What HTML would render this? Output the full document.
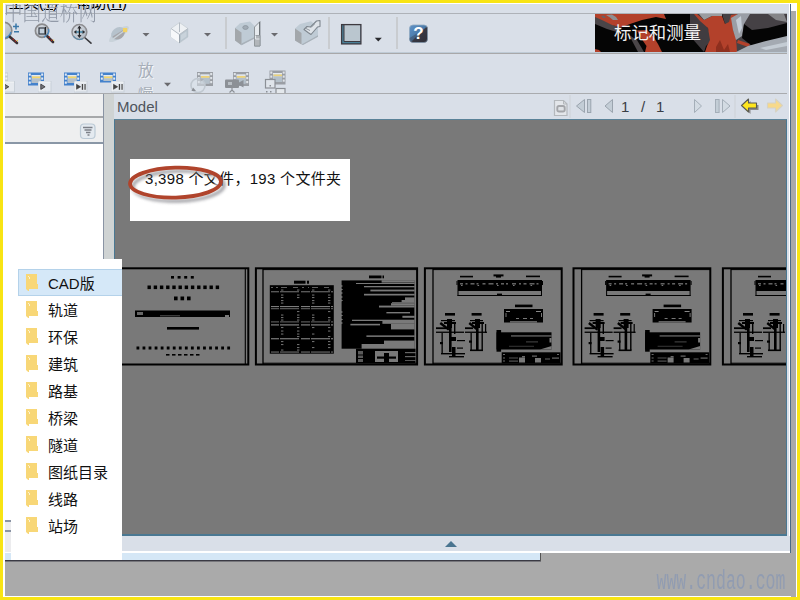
<!DOCTYPE html>
<html lang="zh-CN">
<head>
<meta charset="utf-8">
<title>标记和测量</title>
<style>
html,body{margin:0;padding:0;}
body{width:800px;height:600px;overflow:hidden;background:#f8e414;position:relative;font-family:"Liberation Sans","Noto Sans CJK SC",sans-serif;}
.abs{position:absolute;}
#frame{left:3px;top:3px;width:794px;height:594px;background:#fff;overflow:hidden;}
/* coordinates inside #stage are page coordinates */
#stage{left:-3px;top:-3px;width:800px;height:600px;}
#appbg{left:5px;top:4px;width:785px;height:557px;background:#d9dfe8;}
#deskgray{left:5px;top:561px;width:791px;height:35px;background:#aaaaaa;}
#rightgray{left:791px;top:11px;width:5px;height:586px;background:#aaaaaa;}
#rightline{left:790px;top:4px;width:1px;height:549px;background:#4a6a88;}
#rightwhite{left:789px;top:4px;width:1px;height:549px;background:#fff;}
.hline{height:1px;background:#a9abae;}
#menutext,#menutext2{top:-6px;font-size:15px;line-height:18px;color:#000;white-space:pre;height:18px;overflow:hidden;}
#menutext{right:742px;}
#menutext2{right:673px;}
#wm1{left:4px;top:-1px;font-family:"Liberation Serif","Noto Serif CJK SC",serif;font-weight:300;font-size:18.600px;color:#929aa8;white-space:nowrap;line-height:22px;transform-origin:0 0;transform:scale(1,1.220);}
#leftpanel{left:5px;top:94px;width:98px;height:466px;background:#fff;}
#lp1{left:5px;top:94px;width:98px;height:22px;background:#eeeff0;}
#lp2{left:5px;top:118px;width:98px;height:24px;background:#eeeff0;}
#lpline1{left:5px;top:116px;width:98px;height:2px;background:#a6a8aa;}
#lpline2{left:5px;top:142px;width:98px;height:2px;background:#8a97a6;}
#lpborder{left:103px;top:94px;width:1px;height:166px;background:#8a94a4;}
#splitter{left:104px;top:94px;width:10px;height:170px;background:#cfd3d3;}
#modelbar{left:114px;top:94px;width:673px;height:25px;background:#d9dfe8;}
#modeltxt{left:117px;top:98px;font-size:15px;line-height:17px;color:#4e545c;}
.navt{top:98px;font-size:15px;line-height:17px;color:#3a3e46;}
#bannertxt{left:614px;top:20px;font-size:17.400px;line-height:26px;color:#f2f2f2;white-space:nowrap;}
#helpq{left:409px;top:24px;width:19px;text-align:center;font-size:17px;font-weight:bold;line-height:20px;color:#fff;}
#fang{left:138px;top:61px;font-size:15.500px;line-height:20px;color:#a6aeb8;text-shadow:1px 1px 0 #f4f6f8;}
#fang2{left:138px;top:87px;height:6px;width:20px;overflow:hidden;}
#fang2 span{display:block;font-size:15.500px;line-height:20px;color:#a6aeb8;text-shadow:1px 1px 0 #f4f6f8;margin-top:-3px;}
#view{left:114px;top:119px;width:673px;height:417px;background:#797979;border-left:1px solid #4a7892;border-top:1px solid #5a8298;border-right:1px solid #4a7892;border-bottom:2px solid #4a7892;box-sizing:border-box;overflow:hidden;}
#botbar{left:5px;top:536px;width:785px;height:15px;background:#d9dfe8;}
#botwhite{left:5px;top:551px;width:785px;height:2px;background:#fff;}
#botblue{left:5px;top:553px;width:535px;height:7px;background:#d5e7f6;}
#botdark{left:5px;top:560px;width:536px;height:1px;background:#3a3a44;border-bottom:1px solid #77777c;}
#botdarkr{left:540px;top:553px;width:1px;height:8px;background:#555;}
#tri{left:445px;top:541px;width:0;height:0;border-left:6px solid transparent;border-right:6px solid transparent;border-bottom:6px solid #4a7590;}
#popup{left:11px;top:259px;width:111px;height:301px;background:#fff;}
.row{position:absolute;left:18px;width:104px;height:27px;box-sizing:border-box;}
.row.sel{background:#d5e8f8;border:1px solid #b4d2ea;border-right:none;}
.row span{position:absolute;left:30px;top:5px;font-size:15px;line-height:20px;color:#111;white-space:nowrap;}
.row.sel span{left:29px;top:4px;}
.row svg{position:absolute;left:8px;top:5px;}
.row.sel svg{left:7px;top:4px;}
#whitebox{left:130px;top:159px;width:220px;height:62px;background:#fff;}
#wbtext{left:145px;top:169px;letter-spacing:0.3px;font-size:15px;line-height:20px;color:#111;white-space:nowrap;}
#wm2{left:656.500px;top:562.500px;font-family:"Liberation Mono",monospace;font-size:16.540px;line-height:24px;color:#919cb1;white-space:pre;transform-origin:0 0;transform:scale(1,1.640);}
</style>
</head>
<body>
<div id="frame" class="abs"><div id="stage" class="abs">

<div id="appbg" class="abs"></div>
<div id="deskgray" class="abs"></div>
<div class="abs" style="left:541px;top:553px;width:255px;height:8px;background:#aaaaaa"></div>
<div id="rightwhite" class="abs"></div>
<div id="rightline" class="abs"></div>
<div id="rightgray" class="abs"></div>

<!-- menu bar remnants -->
<div class="abs" style="left:3px;top:3px;width:787px;height:1px;background:#fff;z-index:3"></div>
<div id="menutext" class="abs">工具(<u>T</u>)</div><div id="menutext2" class="abs">帮助(<u>H</u>)</div>
<div class="abs hline" style="left:5px;top:13px;width:782px;background:#aeb2b8"></div>

<!-- toolbar 1 -->
<div id="tb1" class="abs" style="left:0;top:0;width:800px;height:53px;"></div>
<div class="abs hline" style="left:5px;top:52px;width:782px;background:#bfcbd6"></div><div class="abs hline" style="left:5px;top:53px;width:782px;background:#a8a8a9"></div>

<!--BANNER-->
<svg id="banner" class="abs" style="left:595px;top:14px" width="192" height="38" viewBox="595 14 192 38">
<rect x="595" y="14" width="192" height="38" fill="#050505"/>
<!-- left: dark gray band and red -->
<polygon points="595,16 604,20 613,25 622,28 617,32 607,29 595,24" fill="#4a4548"/>
<polygon points="595,14 664,14 666,19 656,17 642,20 630,24 621,27.500 612,25 603,20.500 595,17" fill="#b3412b"/>
<polygon points="606,15 612,14.500 616,17 618,20 613,20 610,17.500" fill="#8e8e92"/>
<polygon points="601,16 604,15.500 606,18 603,18" fill="#6a6064"/>
<polygon points="637,30.500 647,30 653,36 658,44 662,52 645,52 646.500,46 641,38" fill="#b3412b"/>
<polygon points="629,35 637,40 644,52 638,52" fill="#4a4548"/>
<polygon points="595,49 599,50 601,52 595,52" fill="#b3412b"/>
<!-- right -->
<polygon points="690,14 700,14 708,28 712,40 706,46 704,52 690,36" fill="#403c40"/>
<polygon points="724,14 787,14 787,52 730,52" fill="#454145"/>
<polygon points="722,14 731,14 729,22 725,24" fill="#454145"/>
<polygon points="694,14 697,14 704,20 712,16 722,16 725,24 729,22 731,15 737,14 735,22 733,30 736,38 737,52 705,52 707,46 710,40 708,28 700,21" fill="#b3412b"/>
<polygon points="699,14 722,14 722,16 712,16 704,20" fill="#9a9ca0"/>
<polygon points="716,47 720,40 724,50 728,44 730,52 716,52" fill="#8e2f1e"/>
<polygon points="731,18 738,14 750,14 744,24 742,36 736,40 733,30" fill="#9a9ea6"/>
<polygon points="736,20 741,16 742,28 739,34" fill="#c4ccd6"/>
<polygon points="744,24 752,30 768,28 787,23 787,40 766,44 752,46 742,38" fill="#050505"/>
<polygon points="768,14 784,14 787,22 776,20" fill="#858588"/>
<polygon points="738,40 750,44 748,47 737,43" fill="#b3412b"/>
<polygon points="736,52 748,46 766,41 787,36 787,52" fill="#a4aab2"/>
<polygon points="760,48 787,42 787,46 766,50" fill="#c4ccd4"/>
</svg>
<div id="bannertxt" class="abs">标记和测量</div>
<!--/BANNER-->
<!-- toolbar 2 -->
<div id="tb2" class="abs" style="left:0;top:53px;width:800px;height:40px;overflow:hidden"></div>
<div class="abs hline" style="left:5px;top:93px;width:782px;"></div>

<!-- left panel -->
<div id="leftpanel" class="abs"></div>
<div id="lp1" class="abs"></div>
<div id="lpline1" class="abs"></div>
<div id="lp2" class="abs"></div>
<div id="lpline2" class="abs"></div>
<div id="splitter" class="abs"></div>
<div id="lpborder" class="abs"></div>

<!-- model view -->
<div id="modelbar" class="abs"></div>
<div id="modeltxt" class="abs">Model</div>
<div class="abs navt" style="left:621px;">1</div><div class="abs navt" style="left:641px;">/</div><div class="abs navt" style="left:656px;">1</div>
<div id="view" class="abs"></div>
<!--THUMBS-->
<svg id="thumbs" class="abs" style="left:115px;top:120px" width="671" height="414" viewBox="115 120 671 414">
<rect x="110.9" y="268.3" width="137.4" height="96.2" fill="none" stroke="#000" stroke-width="2"/><line x1="245.3" y1="268" x2="245.3" y2="365" stroke="#000" stroke-width="1.1"/><rect x="171" y="276" width="3" height="2.6" fill="#000"/><rect x="177.6" y="276" width="3" height="2.6" fill="#000"/><rect x="184.2" y="276" width="3" height="2.6" fill="#000"/><rect x="190.8" y="276" width="3" height="2.6" fill="#000"/><rect x="147.5" y="285.5" width="3.4" height="3.6" fill="#000"/><rect x="153.7" y="285.5" width="3.4" height="3.6" fill="#000"/><rect x="159.9" y="285.5" width="3.4" height="3.6" fill="#000"/><rect x="166.1" y="285.5" width="3.4" height="3.6" fill="#000"/><rect x="172.3" y="285.5" width="3.4" height="3.6" fill="#000"/><rect x="178.5" y="285.5" width="3.4" height="3.6" fill="#000"/><rect x="184.7" y="285.5" width="3.4" height="3.6" fill="#000"/><rect x="190.9" y="285.5" width="3.4" height="3.6" fill="#000"/><rect x="197.1" y="285.5" width="3.4" height="3.6" fill="#000"/><rect x="203.3" y="285.5" width="3.4" height="3.6" fill="#000"/><rect x="209.5" y="285.5" width="3.4" height="3.6" fill="#000"/><rect x="215.7" y="285.5" width="3.4" height="3.6" fill="#000"/><rect x="174" y="296.5" width="3.6" height="3.8" fill="#000"/><rect x="180.5" y="296.5" width="3.6" height="3.8" fill="#000"/><rect x="187" y="296.5" width="3.6" height="3.8" fill="#000"/><rect x="135" y="310.5" width="95" height="6.5" fill="#000"/><rect x="137" y="312" width="6" height="3" fill="#666"/><rect x="160" y="315.3" width="20" height="1" fill="#555"/><rect x="225" y="315" width="4" height="2.5" fill="#797979"/><rect x="167" y="327" width="32" height="2.6" fill="#000"/><rect x="136.5" y="346.5" width="2.8" height="3" fill="#000"/><rect x="142.55" y="346.5" width="2.8" height="3" fill="#000"/><rect x="148.6" y="346.5" width="2.8" height="3" fill="#000"/><rect x="154.65" y="346.5" width="2.8" height="3" fill="#000"/><rect x="160.7" y="346.5" width="2.8" height="3" fill="#000"/><rect x="166.75" y="346.5" width="2.8" height="3" fill="#000"/><rect x="172.8" y="346.5" width="2.8" height="3" fill="#000"/><rect x="178.85" y="346.5" width="2.8" height="3" fill="#000"/><rect x="184.9" y="346.5" width="2.8" height="3" fill="#000"/><rect x="190.95" y="346.5" width="2.8" height="3" fill="#000"/><rect x="197" y="346.5" width="2.8" height="3" fill="#000"/><rect x="203.05" y="346.5" width="2.8" height="3" fill="#000"/><rect x="209.1" y="346.5" width="2.8" height="3" fill="#000"/><rect x="215.15" y="346.5" width="2.8" height="3" fill="#000"/><rect x="221.2" y="346.5" width="2.8" height="3" fill="#000"/><rect x="227.25" y="346.5" width="2.8" height="3" fill="#000"/><rect x="166" y="354" width="3.5" height="1.6" fill="#000"/><rect x="172" y="354" width="3.5" height="1.6" fill="#000"/><rect x="178" y="354" width="3.5" height="1.6" fill="#000"/><rect x="184" y="354" width="3.5" height="1.6" fill="#000"/><rect x="190" y="354" width="3.5" height="1.6" fill="#000"/><rect x="196" y="354" width="3.5" height="1.6" fill="#000"/>
<rect x="255.9" y="268.3" width="161.2" height="96.2" fill="none" stroke="#000" stroke-width="2"/><line x1="263" y1="268" x2="263" y2="365" stroke="#000" stroke-width="1.3"/><line x1="263" y1="269.6" x2="417" y2="269.6" stroke="#000" stroke-width="1"/><line x1="263" y1="363.2" x2="417" y2="363.2" stroke="#000" stroke-width="1"/><rect x="294" y="280.7" width="11.5" height="3" fill="#000"/><rect x="307" y="280.7" width="2" height="3" fill="#000"/><rect x="269.8" y="285.2" width="64" height="68.5" fill="#000"/><rect x="271" y="291.2" width="8" height="1.1" fill="#6e6e6e"/><rect x="280" y="291.2" width="19" height="1.1" fill="#6e6e6e"/><rect x="301" y="291.2" width="9" height="1.1" fill="#6e6e6e"/><rect x="311" y="291.2" width="19" height="1.1" fill="#6e6e6e"/><rect x="331" y="291.2" width="2" height="1.1" fill="#6e6e6e"/><rect x="271" y="306" width="8" height="1.1" fill="#7c7c7c"/><rect x="280" y="306" width="19" height="1.1" fill="#7c7c7c"/><rect x="301" y="306" width="9" height="1.1" fill="#7c7c7c"/><rect x="311" y="306" width="19" height="1.1" fill="#7c7c7c"/><rect x="331" y="306" width="2" height="1.1" fill="#7c7c7c"/><rect x="271" y="308.2" width="8" height="1" fill="#6a6a6a"/><rect x="280" y="308.2" width="19" height="1" fill="#6a6a6a"/><rect x="301" y="308.2" width="9" height="1" fill="#6a6a6a"/><rect x="311" y="308.2" width="19" height="1" fill="#6a6a6a"/><rect x="331" y="308.2" width="2" height="1" fill="#6a6a6a"/><rect x="271" y="321.4" width="8" height="1" fill="#6a6a6a"/><rect x="280" y="321.4" width="19" height="1" fill="#6a6a6a"/><rect x="301" y="321.4" width="9" height="1" fill="#6a6a6a"/><rect x="311" y="321.4" width="19" height="1" fill="#6a6a6a"/><rect x="331" y="321.4" width="2" height="1" fill="#6a6a6a"/><rect x="271" y="324.3" width="8" height="1.2" fill="#808080"/><rect x="280" y="324.3" width="19" height="1.2" fill="#808080"/><rect x="301" y="324.3" width="9" height="1.2" fill="#808080"/><rect x="311" y="324.3" width="19" height="1.2" fill="#808080"/><rect x="331" y="324.3" width="2" height="1.2" fill="#808080"/><rect x="271" y="338.2" width="8" height="1.1" fill="#858585"/><rect x="280" y="338.2" width="19" height="1.1" fill="#858585"/><rect x="301" y="338.2" width="9" height="1.1" fill="#858585"/><rect x="311" y="338.2" width="19" height="1.1" fill="#858585"/><rect x="331" y="338.2" width="2" height="1.1" fill="#858585"/><rect x="271" y="351.5" width="8" height="1.1" fill="#707070"/><rect x="280" y="351.5" width="19" height="1.1" fill="#707070"/><rect x="301" y="351.5" width="9" height="1.1" fill="#707070"/><rect x="311" y="351.5" width="19" height="1.1" fill="#707070"/><rect x="331" y="351.5" width="2" height="1.1" fill="#707070"/><rect x="271" y="287" width="2" height="1" fill="#5e5e5e"/><rect x="276" y="287" width="2" height="1" fill="#5e5e5e"/><rect x="281" y="287" width="6" height="1" fill="#5e5e5e"/><rect x="293" y="287" width="5" height="1" fill="#5e5e5e"/><rect x="302" y="287" width="2" height="1" fill="#5e5e5e"/><rect x="308" y="287" width="1" height="1" fill="#5e5e5e"/><rect x="312" y="287" width="6" height="1" fill="#5e5e5e"/><rect x="324" y="287" width="5" height="1" fill="#5e5e5e"/><rect x="281" y="289.5" width="2.4" height="1.1" fill="#6c6c6c"/><rect x="297" y="289.5" width="2.4" height="1.1" fill="#6c6c6c"/><rect x="312" y="289.5" width="2.4" height="1.1" fill="#6c6c6c"/><rect x="328" y="289.5" width="2.4" height="1.1" fill="#6c6c6c"/><rect x="281" y="294.5" width="2.4" height="1.1" fill="#6c6c6c"/><rect x="297" y="294.5" width="2.4" height="1.1" fill="#6c6c6c"/><rect x="312" y="294.5" width="2.4" height="1.1" fill="#6c6c6c"/><rect x="328" y="294.5" width="2.4" height="1.1" fill="#6c6c6c"/><rect x="281" y="297" width="2.4" height="1.1" fill="#6c6c6c"/><rect x="297" y="297" width="2.4" height="1.1" fill="#6c6c6c"/><rect x="312" y="297" width="2.4" height="1.1" fill="#6c6c6c"/><rect x="328" y="297" width="2.4" height="1.1" fill="#6c6c6c"/><rect x="281" y="300" width="2.4" height="1.1" fill="#6c6c6c"/><rect x="312" y="300" width="2.4" height="1.1" fill="#6c6c6c"/><rect x="328" y="300" width="2.4" height="1.1" fill="#6c6c6c"/><rect x="281" y="302.5" width="2.4" height="1.1" fill="#6c6c6c"/><rect x="312" y="302.5" width="2.4" height="1.1" fill="#6c6c6c"/><rect x="328" y="302.5" width="2.4" height="1.1" fill="#6c6c6c"/><rect x="297" y="311" width="2.4" height="1.1" fill="#6c6c6c"/><rect x="328" y="311" width="2.4" height="1.1" fill="#6c6c6c"/><rect x="281" y="314.5" width="2.4" height="1.1" fill="#6c6c6c"/><rect x="297" y="314.5" width="2.4" height="1.1" fill="#6c6c6c"/><rect x="312" y="314.5" width="2.4" height="1.1" fill="#6c6c6c"/><rect x="281" y="317" width="2.4" height="1.1" fill="#6c6c6c"/><rect x="297" y="317" width="2.4" height="1.1" fill="#6c6c6c"/><rect x="312" y="317" width="2.4" height="1.1" fill="#6c6c6c"/><rect x="328" y="317" width="2.4" height="1.1" fill="#6c6c6c"/><rect x="281" y="319.5" width="2.4" height="1.1" fill="#6c6c6c"/><rect x="297" y="319.5" width="2.4" height="1.1" fill="#6c6c6c"/><rect x="312" y="319.5" width="2.4" height="1.1" fill="#6c6c6c"/><rect x="328" y="319.5" width="2.4" height="1.1" fill="#6c6c6c"/><rect x="281" y="327" width="2.4" height="1.1" fill="#6c6c6c"/><rect x="297" y="327" width="2.4" height="1.1" fill="#6c6c6c"/><rect x="312" y="327" width="2.4" height="1.1" fill="#6c6c6c"/><rect x="328" y="327" width="2.4" height="1.1" fill="#6c6c6c"/><rect x="281" y="330.5" width="2.4" height="1.1" fill="#6c6c6c"/><rect x="297" y="330.5" width="2.4" height="1.1" fill="#6c6c6c"/><rect x="328" y="330.5" width="2.4" height="1.1" fill="#6c6c6c"/><rect x="281" y="333.5" width="2.4" height="1.1" fill="#6c6c6c"/><rect x="297" y="333.5" width="2.4" height="1.1" fill="#6c6c6c"/><rect x="312" y="333.5" width="2.4" height="1.1" fill="#6c6c6c"/><rect x="297" y="336" width="2.4" height="1.1" fill="#6c6c6c"/><rect x="328" y="336" width="2.4" height="1.1" fill="#6c6c6c"/><rect x="281" y="341" width="2.4" height="1.1" fill="#6c6c6c"/><rect x="312" y="341" width="2.4" height="1.1" fill="#6c6c6c"/><rect x="328" y="341" width="2.4" height="1.1" fill="#6c6c6c"/><rect x="281" y="344" width="2.4" height="1.1" fill="#6c6c6c"/><rect x="297" y="344" width="2.4" height="1.1" fill="#6c6c6c"/><rect x="328" y="344" width="2.4" height="1.1" fill="#6c6c6c"/><rect x="297" y="347" width="2.4" height="1.1" fill="#6c6c6c"/><rect x="312" y="347" width="2.4" height="1.1" fill="#6c6c6c"/><rect x="328" y="347" width="2.4" height="1.1" fill="#6c6c6c"/><rect x="281" y="349.5" width="2.4" height="1.1" fill="#6c6c6c"/><rect x="297" y="349.5" width="2.4" height="1.1" fill="#6c6c6c"/><rect x="369" y="275.5" width="12.5" height="2.8" fill="#000"/><rect x="382.5" y="275.5" width="1.5" height="2.8" fill="#000"/><rect x="341.6" y="280.4" width="72.8" height="68.3" fill="#000"/><rect x="381.6" y="280.2" width="33" height="2.4" fill="#797979"/><rect x="356" y="283" width="58.6" height="1" fill="#797979"/><rect x="364" y="286" width="50.6" height="1.3" fill="#797979"/><rect x="370.4" y="289.6" width="44.2" height="1.8" fill="#797979"/><rect x="364" y="293.8" width="50.6" height="1.7" fill="#797979"/><rect x="405" y="297.4" width="9.6" height="2.6" fill="#797979"/><rect x="401.6" y="300" width="13" height="2.5" fill="#797979"/><rect x="392" y="302.2" width="22.6" height="1" fill="#797979"/><rect x="391" y="303.2" width="23.6" height="2.4" fill="#797979"/><rect x="379" y="305.6" width="35.6" height="1.9" fill="#797979"/><rect x="386.4" y="312" width="23.6" height="1.4" fill="#797979"/><rect x="402.4" y="315.8" width="12.2" height="2" fill="#797979"/><rect x="352" y="319.7" width="62.6" height="1.3" fill="#797979"/><rect x="382.4" y="321" width="32.2" height="2.8" fill="#797979"/><rect x="350.4" y="323.8" width="29.6" height="1.6" fill="#797979"/><rect x="391" y="323.8" width="23.6" height="5.6" fill="#797979"/><rect x="366.4" y="335.4" width="48.2" height="1.5" fill="#797979"/><rect x="384" y="340.6" width="30.6" height="3.4" fill="#797979"/><rect x="361.6" y="344" width="53" height="5" fill="#797979"/><path d="M341 285l2.2 1-2.2 1z" fill="#797979"/><path d="M341 288.5l2.2 1-2.2 1z" fill="#797979"/><path d="M341 292l2.2 1-2.2 1z" fill="#797979"/><path d="M341 296l2.2 1-2.2 1z" fill="#797979"/><path d="M341 299.5l2.2 1-2.2 1z" fill="#797979"/><path d="M341 311l2.2 1-2.2 1z" fill="#797979"/><path d="M341 314.5l2.2 1-2.2 1z" fill="#797979"/><path d="M341 318.5l2.2 1-2.2 1z" fill="#797979"/><path d="M341 322l2.2 1-2.2 1z" fill="#797979"/><rect x="356" y="348.7" width="59.5" height="14.3" fill="#000"/><rect x="358" y="351" width="5" height="11" fill="#5a5a5a"/><rect x="375" y="351" width="23" height="11" fill="#797979"/><rect x="405" y="352" width="11" height="1.2" fill="#666"/><rect x="405" y="356" width="11" height="1.2" fill="#666"/><rect x="405" y="360" width="11" height="1" fill="#555"/><rect x="377" y="356.5" width="19" height="2.2" fill="#000"/><rect x="384" y="353" width="5" height="9" fill="#000"/><rect x="358" y="354.5" width="5" height="1" fill="#000"/><rect x="358" y="358" width="5" height="1" fill="#000"/>
<rect x="424.9" y="268.3" width="136.8" height="96.2" fill="none" stroke="#000" stroke-width="2"/><line x1="433" y1="268" x2="433" y2="365" stroke="#000" stroke-width="1.3"/><line x1="433" y1="269.6" x2="562" y2="269.6" stroke="#000" stroke-width="1"/><line x1="433" y1="363.2" x2="562" y2="363.2" stroke="#000" stroke-width="1"/><rect x="460" y="275.8" width="13" height="1.6" fill="#000"/><rect x="493.5" y="274.4" width="10" height="2" fill="#000"/><rect x="496" y="276" width="5" height="1.6" fill="#000"/><rect x="526" y="275.6" width="14" height="1.6" fill="#000"/><rect x="457.5" y="280" width="84.5" height="11" fill="#000"/><rect x="460" y="283.3" width="3" height="1.1" fill="#8a8a8a"/><rect x="461" y="285" width="1.6" height="1" fill="#777"/><rect x="465.5" y="283.3" width="2" height="1.1" fill="#8a8a8a"/><rect x="470.5" y="283.3" width="4" height="1.1" fill="#8a8a8a"/><rect x="476.5" y="283.3" width="2" height="1.1" fill="#8a8a8a"/><rect x="477.5" y="285" width="1.6" height="1" fill="#777"/><rect x="482.5" y="283.3" width="3" height="1.1" fill="#8a8a8a"/><rect x="488.5" y="283.3" width="5" height="1.1" fill="#8a8a8a"/><rect x="496" y="283.3" width="2" height="1.1" fill="#8a8a8a"/><rect x="497" y="285" width="1.6" height="1" fill="#777"/><rect x="501" y="283.3" width="3" height="1.1" fill="#8a8a8a"/><rect x="506" y="283.3" width="2" height="1.1" fill="#8a8a8a"/><rect x="512" y="283.3" width="4" height="1.1" fill="#8a8a8a"/><rect x="513" y="285" width="1.6" height="1" fill="#777"/><rect x="519" y="283.3" width="2" height="1.1" fill="#8a8a8a"/><rect x="523.5" y="283.3" width="3" height="1.1" fill="#8a8a8a"/><rect x="529.5" y="283.3" width="5" height="1.1" fill="#8a8a8a"/><rect x="530.5" y="285" width="1.6" height="1" fill="#777"/><rect x="536.5" y="283.3" width="2" height="1.1" fill="#8a8a8a"/><rect x="456.5" y="281" width="1" height="4" fill="#000"/><rect x="542" y="281" width="1" height="4" fill="#000"/><rect x="457.5" y="291" width="1" height="5" fill="#000"/><rect x="541" y="291" width="1" height="5" fill="#000"/><rect x="457.5" y="295" width="84.5" height="1" fill="#000"/><rect x="497" y="293.6" width="5" height="1.6" fill="#000"/><rect x="515" y="304.6" width="17.5" height="2.6" fill="#000"/><rect x="504" y="309" width="39" height="13.5" fill="#000"/><rect x="506" y="311" width="4" height="1" fill="#888"/><rect x="536" y="311" width="5" height="1" fill="#888"/><rect x="505.5" y="313" width="1" height="4" fill="#777"/><rect x="541" y="313" width="1" height="4" fill="#777"/><rect x="516" y="318" width="3" height="1" fill="#777"/><rect x="523" y="318" width="4" height="1" fill="#777"/><rect x="530" y="318" width="3" height="1" fill="#777"/><rect x="510" y="321.2" width="27" height="1.3" fill="#797979"/><rect x="445" y="313" width="10" height="2.6" fill="#000"/><rect x="441" y="320" width="14" height="1.2" fill="#000"/><rect x="444" y="322" width="12" height="2" fill="#000"/><rect x="447" y="319" width="5" height="9" fill="#000"/><rect x="436" y="327.3" width="10" height="1.8" fill="#000"/><rect x="436" y="331.6" width="28" height="1.3" fill="#000"/><rect x="449" y="322" width="2.6" height="30" fill="#000"/><rect x="454" y="324" width="1.4" height="10" fill="#000"/><rect x="441.5" y="333" width="1.3" height="21" fill="#000"/><rect x="440" y="342" width="3" height="2.2" fill="#000"/><rect x="441" y="353" width="24" height="1.4" fill="#000"/><rect x="449" y="356" width="15" height="1.4" fill="#000"/><rect x="452" y="347" width="3.5" height="9" fill="#000"/><rect x="457" y="340" width="8" height="1.2" fill="#000"/><rect x="457" y="347.5" width="6" height="1.2" fill="#000"/><rect x="450" y="337" width="6" height="4" fill="#000"/><path d="M441 322l9 7-2 1.600-8.500-6.500z" fill="#000"/><rect x="471.6" y="313" width="10" height="2.6" fill="#000"/><rect x="470" y="320" width="13" height="1.2" fill="#000"/><rect x="472" y="322" width="12" height="2" fill="#000"/><rect x="475" y="319" width="5" height="9" fill="#000"/><rect x="465" y="327.3" width="8" height="1.8" fill="#000"/><rect x="465" y="331.6" width="22" height="1.3" fill="#000"/><rect x="476" y="322" width="2.6" height="28" fill="#000"/><rect x="481.5" y="324" width="1.4" height="26" fill="#000"/><rect x="485" y="324" width="1.2" height="9" fill="#000"/><rect x="470.5" y="333" width="1.3" height="17" fill="#000"/><rect x="469" y="340.5" width="3" height="2.2" fill="#000"/><rect x="470" y="349.5" width="13" height="1.6" fill="#000"/><path d="M470 322l8 6.500-2 1.600-7.500-6z" fill="#000"/><rect x="496.5" y="330" width="4.6" height="21.7" fill="#000"/><rect x="496.5" y="332.3" width="55" height="17.2" fill="#000"/><rect x="511" y="335.4" width="40.5" height="1.1" fill="#797979"/><rect x="526" y="341.4" width="12" height="1" fill="#4a4a4a"/><rect x="549.5" y="338" width="2" height="4.5" fill="#797979"/><rect x="509" y="345.8" width="25" height="0.9" fill="#3c3c3c"/><path d="M540 349.6l11.6-3.600v3.600z" fill="#797979"/><rect x="501.7" y="352.3" width="58.8" height="11" fill="#000"/><rect x="503" y="354" width="2" height="1" fill="#6a6a6a"/><rect x="503" y="357.5" width="2" height="1" fill="#6a6a6a"/><rect x="503" y="360.5" width="2" height="1" fill="#6a6a6a"/><rect x="509" y="357.5" width="9" height="1" fill="#555"/><rect x="509" y="360.5" width="9" height="1.2" fill="#555"/><rect x="519" y="357.5" width="6" height="5" fill="#797979"/><rect x="522" y="356" width="3" height="1.5" fill="#6a6a6a"/><rect x="535" y="358" width="6" height="4.5" fill="#797979"/><rect x="532" y="355.5" width="5" height="1.2" fill="#6a6a6a"/><rect x="545" y="358.5" width="5" height="1" fill="#666"/><rect x="552" y="357.5" width="7" height="1.2" fill="#6a6a6a"/><rect x="557" y="354" width="2" height="1" fill="#666"/>
<rect x="573.5" y="268.3" width="136.8" height="96.2" fill="none" stroke="#000" stroke-width="2"/><line x1="581.6" y1="268" x2="581.6" y2="365" stroke="#000" stroke-width="1.3"/><line x1="581.6" y1="269.6" x2="710.6" y2="269.6" stroke="#000" stroke-width="1"/><line x1="581.6" y1="363.2" x2="710.6" y2="363.2" stroke="#000" stroke-width="1"/><rect x="608.6" y="275.8" width="13" height="1.6" fill="#000"/><rect x="642.1" y="274.4" width="10" height="2" fill="#000"/><rect x="644.6" y="276" width="5" height="1.6" fill="#000"/><rect x="674.6" y="275.6" width="14" height="1.6" fill="#000"/><rect x="606.1" y="280" width="84.5" height="11" fill="#000"/><rect x="608.6" y="283.3" width="3" height="1.1" fill="#8a8a8a"/><rect x="609.6" y="285" width="1.6" height="1" fill="#777"/><rect x="614.1" y="283.3" width="2" height="1.1" fill="#8a8a8a"/><rect x="619.1" y="283.3" width="4" height="1.1" fill="#8a8a8a"/><rect x="625.1" y="283.3" width="2" height="1.1" fill="#8a8a8a"/><rect x="626.1" y="285" width="1.6" height="1" fill="#777"/><rect x="631.1" y="283.3" width="3" height="1.1" fill="#8a8a8a"/><rect x="637.1" y="283.3" width="5" height="1.1" fill="#8a8a8a"/><rect x="644.6" y="283.3" width="2" height="1.1" fill="#8a8a8a"/><rect x="645.6" y="285" width="1.6" height="1" fill="#777"/><rect x="649.6" y="283.3" width="3" height="1.1" fill="#8a8a8a"/><rect x="654.6" y="283.3" width="2" height="1.1" fill="#8a8a8a"/><rect x="660.6" y="283.3" width="4" height="1.1" fill="#8a8a8a"/><rect x="661.6" y="285" width="1.6" height="1" fill="#777"/><rect x="667.6" y="283.3" width="2" height="1.1" fill="#8a8a8a"/><rect x="672.1" y="283.3" width="3" height="1.1" fill="#8a8a8a"/><rect x="678.1" y="283.3" width="5" height="1.1" fill="#8a8a8a"/><rect x="679.1" y="285" width="1.6" height="1" fill="#777"/><rect x="685.1" y="283.3" width="2" height="1.1" fill="#8a8a8a"/><rect x="605.1" y="281" width="1" height="4" fill="#000"/><rect x="690.6" y="281" width="1" height="4" fill="#000"/><rect x="606.1" y="291" width="1" height="5" fill="#000"/><rect x="689.6" y="291" width="1" height="5" fill="#000"/><rect x="606.1" y="295" width="84.5" height="1" fill="#000"/><rect x="645.6" y="293.6" width="5" height="1.6" fill="#000"/><rect x="663.6" y="304.6" width="17.5" height="2.6" fill="#000"/><rect x="652.6" y="309" width="39" height="13.5" fill="#000"/><rect x="654.6" y="311" width="4" height="1" fill="#888"/><rect x="684.6" y="311" width="5" height="1" fill="#888"/><rect x="654.1" y="313" width="1" height="4" fill="#777"/><rect x="689.6" y="313" width="1" height="4" fill="#777"/><rect x="664.6" y="318" width="3" height="1" fill="#777"/><rect x="671.6" y="318" width="4" height="1" fill="#777"/><rect x="678.6" y="318" width="3" height="1" fill="#777"/><rect x="658.6" y="321.2" width="27" height="1.3" fill="#797979"/><rect x="593.6" y="313" width="10" height="2.6" fill="#000"/><rect x="589.6" y="320" width="14" height="1.2" fill="#000"/><rect x="592.6" y="322" width="12" height="2" fill="#000"/><rect x="595.6" y="319" width="5" height="9" fill="#000"/><rect x="584.6" y="327.3" width="10" height="1.8" fill="#000"/><rect x="584.6" y="331.6" width="28" height="1.3" fill="#000"/><rect x="597.6" y="322" width="2.6" height="30" fill="#000"/><rect x="602.6" y="324" width="1.4" height="10" fill="#000"/><rect x="590.1" y="333" width="1.3" height="21" fill="#000"/><rect x="588.6" y="342" width="3" height="2.2" fill="#000"/><rect x="589.6" y="353" width="24" height="1.4" fill="#000"/><rect x="597.6" y="356" width="15" height="1.4" fill="#000"/><rect x="600.6" y="347" width="3.5" height="9" fill="#000"/><rect x="605.6" y="340" width="8" height="1.2" fill="#000"/><rect x="605.6" y="347.5" width="6" height="1.2" fill="#000"/><rect x="598.6" y="337" width="6" height="4" fill="#000"/><path d="M589.6 322l9 7-2 1.600-8.500-6.500z" fill="#000"/><rect x="620.2" y="313" width="10" height="2.6" fill="#000"/><rect x="618.6" y="320" width="13" height="1.2" fill="#000"/><rect x="620.6" y="322" width="12" height="2" fill="#000"/><rect x="623.6" y="319" width="5" height="9" fill="#000"/><rect x="613.6" y="327.3" width="8" height="1.8" fill="#000"/><rect x="613.6" y="331.6" width="22" height="1.3" fill="#000"/><rect x="624.6" y="322" width="2.6" height="28" fill="#000"/><rect x="630.1" y="324" width="1.4" height="26" fill="#000"/><rect x="633.6" y="324" width="1.2" height="9" fill="#000"/><rect x="619.1" y="333" width="1.3" height="17" fill="#000"/><rect x="617.6" y="340.5" width="3" height="2.2" fill="#000"/><rect x="618.6" y="349.5" width="13" height="1.6" fill="#000"/><path d="M618.6 322l8 6.500-2 1.600-7.500-6z" fill="#000"/><rect x="645.1" y="330" width="4.6" height="21.7" fill="#000"/><rect x="645.1" y="332.3" width="55" height="17.2" fill="#000"/><rect x="659.6" y="335.4" width="40.5" height="1.1" fill="#797979"/><rect x="674.6" y="341.4" width="12" height="1" fill="#4a4a4a"/><rect x="698.1" y="338" width="2" height="4.5" fill="#797979"/><rect x="657.6" y="345.8" width="25" height="0.9" fill="#3c3c3c"/><path d="M688.6 349.6l11.6-3.600v3.600z" fill="#797979"/><rect x="650.3" y="352.3" width="58.8" height="11" fill="#000"/><rect x="651.6" y="354" width="2" height="1" fill="#6a6a6a"/><rect x="651.6" y="357.5" width="2" height="1" fill="#6a6a6a"/><rect x="651.6" y="360.5" width="2" height="1" fill="#6a6a6a"/><rect x="657.6" y="357.5" width="9" height="1" fill="#555"/><rect x="657.6" y="360.5" width="9" height="1.2" fill="#555"/><rect x="667.6" y="357.5" width="6" height="5" fill="#797979"/><rect x="670.6" y="356" width="3" height="1.5" fill="#6a6a6a"/><rect x="683.6" y="358" width="6" height="4.5" fill="#797979"/><rect x="680.6" y="355.5" width="5" height="1.2" fill="#6a6a6a"/><rect x="693.6" y="358.5" width="5" height="1" fill="#666"/><rect x="700.6" y="357.5" width="7" height="1.2" fill="#6a6a6a"/><rect x="705.6" y="354" width="2" height="1" fill="#666"/>
<rect x="722.9" y="268.3" width="136.8" height="96.2" fill="none" stroke="#000" stroke-width="2"/><line x1="731" y1="268" x2="731" y2="365" stroke="#000" stroke-width="1.3"/><line x1="731" y1="269.6" x2="860" y2="269.6" stroke="#000" stroke-width="1"/><line x1="731" y1="363.2" x2="860" y2="363.2" stroke="#000" stroke-width="1"/><rect x="758" y="275.8" width="13" height="1.6" fill="#000"/><rect x="791.5" y="274.4" width="10" height="2" fill="#000"/><rect x="794" y="276" width="5" height="1.6" fill="#000"/><rect x="824" y="275.6" width="14" height="1.6" fill="#000"/><rect x="755.5" y="280" width="84.5" height="11" fill="#000"/><rect x="758" y="283.3" width="3" height="1.1" fill="#8a8a8a"/><rect x="759" y="285" width="1.6" height="1" fill="#777"/><rect x="763.5" y="283.3" width="2" height="1.1" fill="#8a8a8a"/><rect x="768.5" y="283.3" width="4" height="1.1" fill="#8a8a8a"/><rect x="774.5" y="283.3" width="2" height="1.1" fill="#8a8a8a"/><rect x="775.5" y="285" width="1.6" height="1" fill="#777"/><rect x="780.5" y="283.3" width="3" height="1.1" fill="#8a8a8a"/><rect x="786.5" y="283.3" width="5" height="1.1" fill="#8a8a8a"/><rect x="794" y="283.3" width="2" height="1.1" fill="#8a8a8a"/><rect x="795" y="285" width="1.6" height="1" fill="#777"/><rect x="799" y="283.3" width="3" height="1.1" fill="#8a8a8a"/><rect x="804" y="283.3" width="2" height="1.1" fill="#8a8a8a"/><rect x="810" y="283.3" width="4" height="1.1" fill="#8a8a8a"/><rect x="811" y="285" width="1.6" height="1" fill="#777"/><rect x="817" y="283.3" width="2" height="1.1" fill="#8a8a8a"/><rect x="821.5" y="283.3" width="3" height="1.1" fill="#8a8a8a"/><rect x="827.5" y="283.3" width="5" height="1.1" fill="#8a8a8a"/><rect x="828.5" y="285" width="1.6" height="1" fill="#777"/><rect x="834.5" y="283.3" width="2" height="1.1" fill="#8a8a8a"/><rect x="754.5" y="281" width="1" height="4" fill="#000"/><rect x="840" y="281" width="1" height="4" fill="#000"/><rect x="755.5" y="291" width="1" height="5" fill="#000"/><rect x="839" y="291" width="1" height="5" fill="#000"/><rect x="755.5" y="295" width="84.5" height="1" fill="#000"/><rect x="795" y="293.6" width="5" height="1.6" fill="#000"/><rect x="813" y="304.6" width="17.5" height="2.6" fill="#000"/><rect x="802" y="309" width="39" height="13.5" fill="#000"/><rect x="804" y="311" width="4" height="1" fill="#888"/><rect x="834" y="311" width="5" height="1" fill="#888"/><rect x="803.5" y="313" width="1" height="4" fill="#777"/><rect x="839" y="313" width="1" height="4" fill="#777"/><rect x="814" y="318" width="3" height="1" fill="#777"/><rect x="821" y="318" width="4" height="1" fill="#777"/><rect x="828" y="318" width="3" height="1" fill="#777"/><rect x="808" y="321.2" width="27" height="1.3" fill="#797979"/><rect x="743" y="313" width="10" height="2.6" fill="#000"/><rect x="739" y="320" width="14" height="1.2" fill="#000"/><rect x="742" y="322" width="12" height="2" fill="#000"/><rect x="745" y="319" width="5" height="9" fill="#000"/><rect x="734" y="327.3" width="10" height="1.8" fill="#000"/><rect x="734" y="331.6" width="28" height="1.3" fill="#000"/><rect x="747" y="322" width="2.6" height="30" fill="#000"/><rect x="752" y="324" width="1.4" height="10" fill="#000"/><rect x="739.5" y="333" width="1.3" height="21" fill="#000"/><rect x="738" y="342" width="3" height="2.2" fill="#000"/><rect x="739" y="353" width="24" height="1.4" fill="#000"/><rect x="747" y="356" width="15" height="1.4" fill="#000"/><rect x="750" y="347" width="3.5" height="9" fill="#000"/><rect x="755" y="340" width="8" height="1.2" fill="#000"/><rect x="755" y="347.5" width="6" height="1.2" fill="#000"/><rect x="748" y="337" width="6" height="4" fill="#000"/><path d="M739 322l9 7-2 1.600-8.500-6.500z" fill="#000"/><rect x="769.6" y="313" width="10" height="2.6" fill="#000"/><rect x="768" y="320" width="13" height="1.2" fill="#000"/><rect x="770" y="322" width="12" height="2" fill="#000"/><rect x="773" y="319" width="5" height="9" fill="#000"/><rect x="763" y="327.3" width="8" height="1.8" fill="#000"/><rect x="763" y="331.6" width="22" height="1.3" fill="#000"/><rect x="774" y="322" width="2.6" height="28" fill="#000"/><rect x="779.5" y="324" width="1.4" height="26" fill="#000"/><rect x="783" y="324" width="1.2" height="9" fill="#000"/><rect x="768.5" y="333" width="1.3" height="17" fill="#000"/><rect x="767" y="340.5" width="3" height="2.2" fill="#000"/><rect x="768" y="349.5" width="13" height="1.6" fill="#000"/><path d="M768 322l8 6.500-2 1.600-7.500-6z" fill="#000"/><rect x="794.5" y="330" width="4.6" height="21.7" fill="#000"/><rect x="794.5" y="332.3" width="55" height="17.2" fill="#000"/><rect x="809" y="335.4" width="40.5" height="1.1" fill="#797979"/><rect x="824" y="341.4" width="12" height="1" fill="#4a4a4a"/><rect x="847.5" y="338" width="2" height="4.5" fill="#797979"/><rect x="807" y="345.8" width="25" height="0.9" fill="#3c3c3c"/><path d="M838 349.6l11.6-3.600v3.600z" fill="#797979"/><rect x="799.7" y="352.3" width="58.8" height="11" fill="#000"/><rect x="801" y="354" width="2" height="1" fill="#6a6a6a"/><rect x="801" y="357.5" width="2" height="1" fill="#6a6a6a"/><rect x="801" y="360.5" width="2" height="1" fill="#6a6a6a"/><rect x="807" y="357.5" width="9" height="1" fill="#555"/><rect x="807" y="360.5" width="9" height="1.2" fill="#555"/><rect x="817" y="357.5" width="6" height="5" fill="#797979"/><rect x="820" y="356" width="3" height="1.5" fill="#6a6a6a"/><rect x="833" y="358" width="6" height="4.5" fill="#797979"/><rect x="830" y="355.5" width="5" height="1.2" fill="#6a6a6a"/><rect x="843" y="358.5" width="5" height="1" fill="#666"/><rect x="850" y="357.5" width="7" height="1.2" fill="#6a6a6a"/><rect x="855" y="354" width="2" height="1" fill="#666"/>
</svg>
<!--/THUMBS-->
<div id="whitebox" class="abs"></div>
<div id="wbtext" class="abs">3,398 个文件，193 个文件夹</div>

<!-- bottom bars -->
<div id="botbar" class="abs"></div>
<div id="botwhite" class="abs"></div>
<div id="botblue" class="abs"></div>
<div id="botdark" class="abs"></div>
<div id="botdarkr" class="abs"></div>
<div id="tri" class="abs"></div>

<!-- folder popup -->
<div id="popup" class="abs"></div>
<div class="row sel" style="top:269px"><svg width="13" height="18" viewBox="0 0 13 18"><polygon points="0,0 11,0 11,10 12,10 12,15 3,15 3,17 2.2,17 0,15" fill="#f8d777"/><rect x="2" y="2" width="1" height="1" fill="#fdf3cf"/><rect x="3" y="3" width="1" height="2" fill="#fdf3cf"/></svg><span>CAD版</span></div>
<div class="row" style="top:296px"><svg width="13" height="18" viewBox="0 0 13 18"><polygon points="0,0 11,0 11,10 12,10 12,15 3,15 3,17 2.2,17 0,15" fill="#f8d777"/><rect x="2" y="2" width="1" height="1" fill="#fdf3cf"/><rect x="3" y="3" width="1" height="2" fill="#fdf3cf"/></svg><span>轨道</span></div>
<div class="row" style="top:323px"><svg width="13" height="18" viewBox="0 0 13 18"><polygon points="0,0 11,0 11,10 12,10 12,15 3,15 3,17 2.2,17 0,15" fill="#f8d777"/><rect x="2" y="2" width="1" height="1" fill="#fdf3cf"/><rect x="3" y="3" width="1" height="2" fill="#fdf3cf"/></svg><span>环保</span></div>
<div class="row" style="top:350px"><svg width="13" height="18" viewBox="0 0 13 18"><polygon points="0,0 11,0 11,10 12,10 12,15 3,15 3,17 2.2,17 0,15" fill="#f8d777"/><rect x="2" y="2" width="1" height="1" fill="#fdf3cf"/><rect x="3" y="3" width="1" height="2" fill="#fdf3cf"/></svg><span>建筑</span></div>
<div class="row" style="top:377px"><svg width="13" height="18" viewBox="0 0 13 18"><polygon points="0,0 11,0 11,10 12,10 12,15 3,15 3,17 2.2,17 0,15" fill="#f8d777"/><rect x="2" y="2" width="1" height="1" fill="#fdf3cf"/><rect x="3" y="3" width="1" height="2" fill="#fdf3cf"/></svg><span>路基</span></div>
<div class="row" style="top:404px"><svg width="13" height="18" viewBox="0 0 13 18"><polygon points="0,0 11,0 11,10 12,10 12,15 3,15 3,17 2.2,17 0,15" fill="#f8d777"/><rect x="2" y="2" width="1" height="1" fill="#fdf3cf"/><rect x="3" y="3" width="1" height="2" fill="#fdf3cf"/></svg><span>桥梁</span></div>
<div class="row" style="top:431px"><svg width="13" height="18" viewBox="0 0 13 18"><polygon points="0,0 11,0 11,10 12,10 12,15 3,15 3,17 2.2,17 0,15" fill="#f8d777"/><rect x="2" y="2" width="1" height="1" fill="#fdf3cf"/><rect x="3" y="3" width="1" height="2" fill="#fdf3cf"/></svg><span>隧道</span></div>
<div class="row" style="top:458px"><svg width="13" height="18" viewBox="0 0 13 18"><polygon points="0,0 11,0 11,10 12,10 12,15 3,15 3,17 2.2,17 0,15" fill="#f8d777"/><rect x="2" y="2" width="1" height="1" fill="#fdf3cf"/><rect x="3" y="3" width="1" height="2" fill="#fdf3cf"/></svg><span>图纸目录</span></div>
<div class="row" style="top:485px"><svg width="13" height="18" viewBox="0 0 13 18"><polygon points="0,0 11,0 11,10 12,10 12,15 3,15 3,17 2.2,17 0,15" fill="#f8d777"/><rect x="2" y="2" width="1" height="1" fill="#fdf3cf"/><rect x="3" y="3" width="1" height="2" fill="#fdf3cf"/></svg><span>线路</span></div>
<div class="row" style="top:512px"><svg width="13" height="18" viewBox="0 0 13 18"><polygon points="0,0 11,0 11,10 12,10 12,15 3,15 3,17 2.2,17 0,15" fill="#f8d777"/><rect x="2" y="2" width="1" height="1" fill="#fdf3cf"/><rect x="3" y="3" width="1" height="2" fill="#fdf3cf"/></svg><span>站场</span></div>

<svg id="icons" class="abs" style="left:0;top:0" width="800" height="600" viewBox="0 0 800 600">
<defs>
<clipPath id="clipTb2"><rect x="5" y="53" width="782" height="40"/></clipPath>
<clipPath id="clipWB"><rect x="130" y="159" width="220" height="62"/></clipPath>
<clipPath id="clipApp"><rect x="5" y="4" width="785" height="557"/></clipPath>
<linearGradient id="gHelp" x1="0" y1="0" x2="1" y2="1"><stop offset="0" stop-color="#5f92c8"/><stop offset="0.5" stop-color="#4a7aa8"/><stop offset="0.55" stop-color="#3a3c48"/><stop offset="1" stop-color="#2c2c34"/></linearGradient>
<linearGradient id="gLens" x1="0" y1="0" x2="1" y2="1"><stop offset="0" stop-color="#dde1e6"/><stop offset="1" stop-color="#aab4c0"/></linearGradient>
<linearGradient id="gFilm" x1="0" y1="0" x2="0" y2="1"><stop offset="0" stop-color="#f3d566"/><stop offset="0.3" stop-color="#f3d566"/><stop offset="0.31" stop-color="#c8ccd0"/><stop offset="1" stop-color="#9aa6b0"/></linearGradient>
</defs>
<g clip-path="url(#clipApp)">
<!-- toolbar separators -->
<g fill="#c9ccd0"><rect x="225" y="17" width="2" height="32"/><rect x="328" y="17" width="2" height="32"/><rect x="396" y="17" width="2" height="32"/></g>
<!-- magnifier 1 (partial) -->
<g>
<circle cx="3.500" cy="30.500" r="8.300" fill="url(#gLens)" stroke="#8a8a8c" stroke-width="1.600"/>
<path d="M5.500 37.800 A8 8 0 0 0 11 32" fill="none" stroke="#4a88c0" stroke-width="1.5"/>
<line x1="10" y1="37" x2="17" y2="43" stroke="#3a3034" stroke-width="2.6" stroke-linecap="round"/>
<rect x="12.6" y="38.6" width="1.2" height="1.2" fill="#d03020"/><rect x="14.8" y="40.4" width="1.2" height="1.2" fill="#d03020"/><rect x="16.8" y="40" width="1.2" height="1.2" fill="#f0d050"/>
<path d="M13 26.5h6M16 23.5v6M14 31.8h5" stroke="#3a78a8" stroke-width="1.5" fill="none"/>
</g>
<!-- magnifier 2 -->
<g>
<circle cx="42" cy="30.8" r="6.6" fill="url(#gLens)" stroke="#8a8a8c" stroke-width="1.7"/>
<path d="M44 37 A6.6 6.6 0 0 0 48.5 29" fill="none" stroke="#4a88c0" stroke-width="1.4"/>
<rect x="39" y="28" width="6" height="6" fill="#c4d0dc" stroke="#3a4048" stroke-width="1.2"/>
<line x1="45.5" y1="27" x2="45.5" y2="34.5" stroke="#222" stroke-width="1.2"/>
<line x1="47.5" y1="36.5" x2="53" y2="42" stroke="#3a3034" stroke-width="2.6" stroke-linecap="round"/>
<rect x="48.8" y="36.6" width="1.2" height="1.2" fill="#d03020"/><rect x="51" y="39.6" width="1.2" height="1.2" fill="#d03020"/><rect x="53" y="39.6" width="1.2" height="1.2" fill="#f0d050"/>
</g>
<!-- magnifier 3 -->
<g>
<circle cx="79.400" cy="32" r="7.400" fill="url(#gLens)" stroke="#8e8e92" stroke-width="1.500"/>
<path d="M75.500 32h8" stroke="#3f86a8" stroke-width="1.500" fill="none"/>
<path d="M79.400 27v10" stroke="#222" stroke-width="1.200" fill="none"/>
<path d="M79.400 25.600l2.100 2.900h-4.200zM79.400 38l2.100-2.900h-4.200zM73.800 32l2.600-2.100v4.200zM85.200 32l-2.600-2.100v4.200z" fill="#2a2a2e"/>
<path d="M73.600 36a7 7 0 0 0 9.500 2.600" fill="none" stroke="#4a88b0" stroke-width="1.200" opacity="0.800"/>
<line x1="85.200" y1="38" x2="91" y2="43.200" stroke="#3a3a3e" stroke-width="1.600" stroke-linecap="round"/>
</g>
<!-- planet (disabled) -->
<g>
<ellipse cx="119" cy="34" rx="12" ry="4.200" transform="rotate(-38 119 34)" fill="#c6d0d8" opacity="0.900"/>
<ellipse cx="118" cy="33.500" rx="7.500" ry="5.800" transform="rotate(-38 118 33.500)" fill="#b6c2cc"/>
<path d="M112.500 36.500 L124 29.500 a7.500 5.800 -38 0 1 -2.500 8.500 a7.500 5.800 -38 0 1 -9 -1.500z" fill="#a6a6aa"/>
<path d="M109.500 41.500 L124 31" stroke="#c9d3da" stroke-width="1.400" fill="none"/>
<rect x="123" y="28" width="4.200" height="4.200" fill="#f2d264"/>
</g>
<!-- dropdown arrows -->
<g fill="#6a6a6e"><path d="M142.5 33h7l-3.5 3.6z"/><path d="M204 33h7l-3.5 3.6z"/><path d="M271 33h7l-3.500 3.600z"/></g>
<path d="M374.800 37.800h7l-3.500 3.800z" fill="#2a2a2e"/>
<!-- cube (disabled) -->
<g stroke-linejoin="round">
<path d="M179.500 22.500l8.500 6v8.500l-8.500 6-8.500-6v-8.500z" fill="#eef1f4" stroke="#cdd4da" stroke-width="1"/>
<path d="M179.500 34.500l8.500-6v8.500l-8.500 6z" fill="#b9c5ce"/>
<path d="M181 35l5.500-3.800v5.300l-5.500 3.800z" fill="#c9d3db"/>
<path d="M179.500 34.500l-8.500-6v8.500l8.500 6z" fill="#f6f8fa"/>
<path d="M179.500 22.500v9.500M171 28.500l8.500 6 8.500-6" fill="none" stroke="#b4bcc4" stroke-width="1"/>
<path d="M179.500 34.500v8.500" stroke="#9aa4ae" stroke-width="1"/>
</g>
<!-- block + section plane -->
<g>
<path d="M235 28l5-4.800 10-1.700 4.500 4.500v12.500l-13 6.700-6.500-4.700z" fill="#bfcbd5"/>
<path d="M235 28l6.500 4.500v12.700l-6.500-4.700z" fill="#a3a7ab"/>
<path d="M241.500 45.200l13-6.700v-1.500l-13 6.500z" fill="#a9b1b9"/>
<ellipse cx="245.500" cy="27.500" rx="2.700" ry="1.900" fill="#a2acb6" stroke="#8c96a0" stroke-width="0.900"/>
<path d="M254.500 27l5.500-5.500v24.500h-5.500z" fill="#e6eaee" stroke="#8e9499" stroke-width="1"/>
<path d="M259.500 22v24" stroke="#6e7479" stroke-width="1"/>
<path d="M254.500 35.500h5.500v10.500h-5.500z" fill="#b2b6ba" stroke="#8e9499" stroke-width="0.800"/>
<path d="M255.500 35.500v3.500h4" fill="none" stroke="#e6eaee" stroke-width="1"/>
</g>
<!-- block + pointer -->
<g>
<path d="M295 28.500l5-4.500 11-2.800 7 5.800v9.500l-15 8.500-8-4.500z" fill="#bfcbd5"/>
<path d="M295 28.500l6.500 4.500v11.500l-6.500-4z" fill="#a3a7ab"/>
<path d="M301.500 44.500l16.500-9.300v1.500l-15 8.300z" fill="#a9b1b9"/>
<path d="M304 29.500l3-3 3.500 0.500 4.500-4.500 1.500-1.500 3.500-0.500v6l-2.500 0.500-6.500 7.500-3-2z" fill="#dfe4e9" stroke="#7e868e" stroke-width="1.100" stroke-linejoin="round"/>
<path d="M306 28.500l4 2M311 27.500l3.500-3.500" stroke="#8e969e" stroke-width="1" fill="none"/>
</g>
<!-- square icon -->
<g>
<rect x="341.500" y="24.500" width="19.500" height="19.500" fill="#4a8098"/>
<rect x="344" y="25" width="16.500" height="16" fill="#bac6cf"/>
<rect x="341.600" y="24.600" width="19.300" height="19.300" fill="none" stroke="#3e3a40" stroke-width="1.300"/>
<path d="M344 25v16.500h16.500" fill="none" stroke="#3e3a40" stroke-width="1"/>
</g>
<!-- help -->
<g>
<rect x="409.500" y="25" width="18" height="17.500" rx="3.500" fill="url(#gHelp)" stroke="#8fa8c0" stroke-width="0.800"/>
<path d="M409.500 38 L427.500 27 V39 a3.500 3.500 0 0 1 -3.500 3.500 H413 a3.500 3.500 0 0 1 -3.500 -3.500z" fill="#33343c" opacity="0.350"/>
</g>
</g>
<!--TB2-->
<g clip-path="url(#clipTb2)">
<rect x="5" y="72.500" width="3" height="9.500" fill="#c4ccd4"/><rect x="5.300" y="73.500" width="2" height="2" fill="#eef1f5"/><rect x="5.300" y="77.500" width="2" height="2" fill="#eef1f5"/>
<g transform="translate(2.500 81.500)"><rect x="0" y="0" width="12" height="10.500" fill="#e6eaef" stroke="#c8d0d8" stroke-width="1"/><path d="M0.500 10V0.500H11.500" fill="none" stroke="#f4f6f8" stroke-width="1"/><path d="M2 2.700l4.300 2.600-4.300 2.600z" fill="#77777c" stroke="#3c3c40" stroke-width="0.900"/></g>
<g transform="translate(28 72.5)"><rect x="0" y="0" width="16" height="13" fill="#4482cc"/><rect x="0.8" y="1" width="2" height="2.2" fill="#e4ebf5"/><rect x="13.2" y="1" width="2" height="2.2" fill="#e4ebf5"/><rect x="0.8" y="5" width="2" height="2.2" fill="#e4ebf5"/><rect x="13.2" y="5" width="2" height="2.2" fill="#e4ebf5"/><rect x="0.8" y="9" width="2" height="2.2" fill="#e4ebf5"/><rect x="13.2" y="9" width="2" height="2.2" fill="#e4ebf5"/><rect x="3.5" y="2.5" width="9" height="8" fill="#c6d0d8"/><rect x="3.5" y="2.5" width="9" height="1.3" fill="#e6eaee"/><rect x="4" y="4" width="8.500" height="1.800" fill="#f4d668"/><rect x="4" y="6" width="8.500" height="4.5" fill="#b4c0ca"/></g>
<g transform="translate(38.5 81.5)"><rect x="0" y="0" width="12.5" height="10.5" fill="#e6eaef" stroke="#c8d0d8" stroke-width="1"/><path d="M0.500 10.0V0.500H12.0" fill="none" stroke="#f4f6f8" stroke-width="1"/><path d="M2.300 2.700l4.300 2.600-4.300 2.600z" fill="#77777c" stroke="#3c3c40" stroke-width="0.900"/></g>
<g transform="translate(64 72.5)"><rect x="0" y="0" width="16" height="13" fill="#4482cc"/><rect x="0.8" y="1" width="2" height="2.2" fill="#e4ebf5"/><rect x="13.2" y="1" width="2" height="2.2" fill="#e4ebf5"/><rect x="0.8" y="5" width="2" height="2.2" fill="#e4ebf5"/><rect x="13.2" y="5" width="2" height="2.2" fill="#e4ebf5"/><rect x="0.8" y="9" width="2" height="2.2" fill="#e4ebf5"/><rect x="13.2" y="9" width="2" height="2.2" fill="#e4ebf5"/><rect x="3.5" y="2.5" width="9" height="8" fill="#c6d0d8"/><rect x="3.5" y="2.5" width="9" height="1.3" fill="#e6eaee"/><rect x="4" y="4" width="8.500" height="1.800" fill="#f4d668"/><rect x="4" y="6" width="8.500" height="4.5" fill="#b4c0ca"/></g>
<g transform="translate(74.5 81.5)"><rect x="0" y="0" width="12.5" height="10.5" fill="#e6eaef" stroke="#c8d0d8" stroke-width="1"/><path d="M0.500 10.0V0.500H12.0" fill="none" stroke="#f4f6f8" stroke-width="1"/><path d="M2 2.800l4.200 2.500-4.200 2.500z" fill="#444" stroke="#333" stroke-width="0.500"/><rect x="7.300" y="2.500" width="1.300" height="5.800" fill="#444"/><rect x="9.900" y="2.500" width="1.300" height="5.800" fill="#555"/></g>
<g transform="translate(100 72.5)"><rect x="0" y="0" width="16" height="10" fill="#4482cc"/><rect x="0.8" y="1" width="2" height="2.2" fill="#e4ebf5"/><rect x="13.2" y="1" width="2" height="2.2" fill="#e4ebf5"/><rect x="0.8" y="5" width="2" height="2.2" fill="#e4ebf5"/><rect x="13.2" y="5" width="2" height="2.2" fill="#e4ebf5"/><rect x="3.5" y="2.5" width="9" height="6" fill="#c6d0d8"/><rect x="3.5" y="2.5" width="9" height="1.3" fill="#e6eaee"/><rect x="4" y="4" width="8.500" height="1.800" fill="#f4d668"/><rect x="4" y="6" width="8.500" height="2.5" fill="#b4c0ca"/></g>
<g transform="translate(111.5 81.5)"><rect x="0" y="0" width="12.5" height="10.5" fill="#e6eaef" stroke="#c8d0d8" stroke-width="1"/><path d="M0.500 10.0V0.500H12.0" fill="none" stroke="#f4f6f8" stroke-width="1"/><path d="M2 2.800l4.200 2.500-4.200 2.500z" fill="#444" stroke="#333" stroke-width="0.500"/><rect x="7.300" y="2.500" width="1.300" height="5.800" fill="#444"/><rect x="9.900" y="2.500" width="1.300" height="5.800" fill="#555"/></g>
<path d="M164 82.800h7l-3.500 3.600z" fill="#6a6a6e"/>
<g transform="translate(197 72)"><rect x="0" y="0" width="16" height="14" fill="#9a9ea4"/><rect x="0.8" y="1" width="2" height="2.2" fill="#dfe3e8"/><rect x="13.2" y="1" width="2" height="2.2" fill="#dfe3e8"/><rect x="0.8" y="5" width="2" height="2.2" fill="#dfe3e8"/><rect x="13.2" y="5" width="2" height="2.2" fill="#dfe3e8"/><rect x="0.8" y="9" width="2" height="2.2" fill="#dfe3e8"/><rect x="13.2" y="9" width="2" height="2.2" fill="#dfe3e8"/><rect x="3.5" y="2.5" width="9" height="9" fill="#c6d0d8"/><rect x="3.5" y="2.5" width="9" height="1.3" fill="#e6eaee"/><rect x="4" y="4" width="8.500" height="1.800" fill="#ecd27a"/><rect x="4" y="6" width="8.500" height="5.5" fill="#b4c0ca"/></g>
<circle cx="198" cy="85.500" r="7" fill="#dbe1ea" fill-opacity="0.550" stroke="#c0c8d0" stroke-width="1.600"/><path d="M191.500 91l1.500-3.500 3 3.500z" fill="#8a8e94"/><path d="M200 78l4 1.500-3.500 2z" fill="#aab0b6"/>
<g transform="translate(233 72)"><rect x="0" y="0" width="16" height="14" fill="#9a9ea4"/><rect x="0.8" y="1" width="2" height="2.2" fill="#dfe3e8"/><rect x="13.2" y="1" width="2" height="2.2" fill="#dfe3e8"/><rect x="0.8" y="5" width="2" height="2.2" fill="#dfe3e8"/><rect x="13.2" y="5" width="2" height="2.2" fill="#dfe3e8"/><rect x="0.8" y="9" width="2" height="2.2" fill="#dfe3e8"/><rect x="13.2" y="9" width="2" height="2.2" fill="#dfe3e8"/><rect x="3.5" y="2.5" width="9" height="9" fill="#c6d0d8"/><rect x="3.5" y="2.5" width="9" height="1.3" fill="#e6eaee"/><rect x="4" y="4" width="8.500" height="1.800" fill="#ecd27a"/><rect x="4" y="6" width="8.500" height="5.5" fill="#b4c0ca"/></g>
<rect x="225" y="79.500" width="14" height="8.500" rx="1" fill="#8c9096"/><path d="M239 82.500l4.500-2.500v7.500l-4.500-2.500z" fill="#8c9096"/><rect x="228" y="82" width="4" height="3" fill="#b8bec4"/><path d="M232 88v2.500M229.500 92.500l2.500-2.500 2.500 2.500" stroke="#8c9096" stroke-width="1.200" fill="none"/>
<g transform="translate(269.5 70.5)"><rect x="0" y="0" width="16" height="14" fill="#9a9ea4"/><rect x="0.8" y="1" width="2" height="2.2" fill="#dfe3e8"/><rect x="13.2" y="1" width="2" height="2.2" fill="#dfe3e8"/><rect x="0.8" y="5" width="2" height="2.2" fill="#dfe3e8"/><rect x="13.2" y="5" width="2" height="2.2" fill="#dfe3e8"/><rect x="0.8" y="9" width="2" height="2.2" fill="#dfe3e8"/><rect x="13.2" y="9" width="2" height="2.2" fill="#dfe3e8"/><rect x="3.5" y="2.5" width="9" height="9" fill="#c6d0d8"/><rect x="3.5" y="2.5" width="9" height="1.3" fill="#e6eaee"/><rect x="4" y="4" width="8.500" height="1.800" fill="#ecd27a"/><rect x="4" y="6" width="8.500" height="5.5" fill="#b4c0ca"/></g>
<rect x="265.500" y="79.500" width="9.500" height="8.500" fill="#dfe4ea" stroke="#8c9096" stroke-width="1.200"/><rect x="269.500" y="85" width="1.500" height="1.500" fill="#8c9096"/><rect x="276" y="88.500" width="9" height="6" fill="#e4e8ec" stroke="#8c9096" stroke-width="1.200"/><rect x="266" y="91" width="1.500" height="1.500" fill="#8c9096"/><rect x="270" y="91" width="1.500" height="1.500" fill="#8c9096"/>
</g>
<!--/TB2-->
<!--EXTRA-->
<g id="extra">
<!-- red ellipse with shadow -->
<defs><filter id="blur1" x="-20%" y="-30%" width="140%" height="170%"><feGaussianBlur stdDeviation="1.600"/></filter></defs>
<ellipse cx="178.500" cy="186" rx="45.500" ry="15" fill="none" stroke="#66666e" stroke-width="3.500" opacity="0.600" filter="url(#blur1)" transform="rotate(-1.500 178 186)"/>
<g clip-path="url(#clipWB)"><ellipse cx="172.500" cy="182" rx="45.500" ry="15" fill="none" stroke="#ffffff" stroke-width="3" opacity="0.850" filter="url(#blur1)" transform="rotate(-1.500 172 182)"/></g>
<ellipse cx="175.500" cy="182.600" rx="45.500" ry="15" fill="none" stroke="#b0442c" stroke-width="3.800" transform="rotate(-1.500 175.500 182.600)"/>
<!-- filter icon -->
<rect x="80.500" y="124" width="14.500" height="14.500" rx="3.500" fill="#e4eaf0" stroke="#bccad6" stroke-width="1.200"/>
<path d="M83 127.500h9.500M84.500 130h7M86 132.500h4.500M87.500 135h2" stroke="#7c8088" stroke-width="1.500" fill="none"/>
<!-- left panel bottom lines -->
<rect x="5" y="520" width="6" height="2" fill="#8a94a4"/><rect x="5" y="522" width="6" height="8" fill="#ececee"/>
<rect x="5" y="530" width="6" height="2" fill="#8a94a4"/><rect x="5" y="532" width="6" height="20" fill="#ececee"/>
</g>
<!--/EXTRA-->
<!--NAV-->
<g id="nav">
<!-- page icon -->
<path d="M554.500 100.500h9l3.500 3.500v11.500h-12.500z" fill="#e3e6ea" stroke="#b4b8bc" stroke-width="1.200"/>
<path d="M563.500 100.500v3.500h3.500" fill="none" stroke="#b4b8bc" stroke-width="1"/>
<rect x="557.300" y="106" width="7.400" height="5.500" rx="1.800" fill="#dfe2e6" stroke="#a4a6aa" stroke-width="1.900"/>
<rect x="569.500" y="95" width="1" height="23" fill="#cdd1d6"/>
<!-- first -->
<path d="M584.500 99.500v13l-8-6.500z" fill="#c3cdd6" stroke="#9aa4ae" stroke-width="1"/>
<rect x="587.500" y="99.500" width="3.300" height="13" fill="#c3cdd6" stroke="#9aa4ae" stroke-width="1"/>
<!-- prev -->
<path d="M612.500 99.500v13l-7.500-6.500z" fill="#c3cdd6" stroke="#9aa4ae" stroke-width="1"/>
<!-- next -->
<path d="M694.500 99.500v13l7-6.500z" fill="#d3dbe3" stroke="#a4aeb8" stroke-width="1"/>
<!-- last -->
<rect x="715.500" y="99.500" width="3.600" height="13" fill="#c3cdd6" stroke="#a4aeb8" stroke-width="1"/>
<path d="M722.500 99.500v13l7.500-6.500z" fill="#d3dbe3" stroke="#a4aeb8" stroke-width="1"/>
<rect x="734.500" y="95" width="1" height="23" fill="#cdd1d6"/>
<!-- yellow back arrow -->
<path d="M742.500 106.500l7-6.500v4h8v5h-8v4z" fill="#8a8a8a" transform="translate(1 1)"/>
<path d="M741.500 105.500l7-6.500v4h8v5h-8v4z" fill="#ffe61e" stroke="#5a5a52" stroke-width="1.100" stroke-linejoin="round"/>
<!-- pale forward arrow -->
<path d="M782.500 105.500l-7-6.500v4h-8v5h8v4z" fill="#f7d98a" stroke="#d6d2c4" stroke-width="1.100" stroke-linejoin="round"/>
</g>
<!--/NAV-->
</svg>
<div id="helpq" class="abs">?</div>
<div id="fang" class="abs">放</div><div id="fang2" class="abs"><span>慢</span></div>
<div id="wm1" class="abs">中国道桥网</div>
<div id="wm2" class="abs">www.cndao.com</div>

</div></div>
</body>
</html>
